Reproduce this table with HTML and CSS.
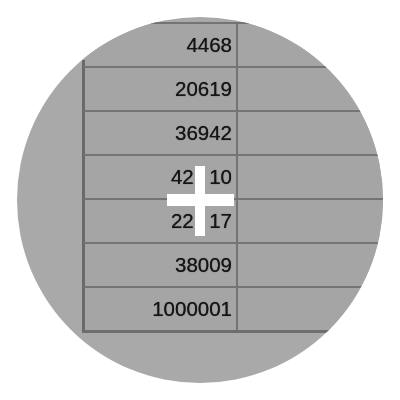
FILE: index.html
```
<!DOCTYPE html>
<html>
<head>
<meta charset="utf-8">
<link rel="stylesheet" href="styles.css">
</head>
<body>
<div class="lens">
  <div class="sheet">
    <div class="row first"><div class="a">4468</div><div class="b"></div></div>
    <div class="row"><div class="a">20619</div><div class="b"></div></div>
    <div class="row"><div class="a">36942</div><div class="b"></div></div>
    <div class="row"><div class="a">42<span class="hid">1</span>10</div><div class="b"></div></div>
    <div class="row"><div class="a">22<span class="hid">1</span>17</div><div class="b"></div></div>
    <div class="row"><div class="a">38009</div><div class="b"></div></div>
    <div class="row last"><div class="a">1000001</div><div class="b"></div></div>
  </div>
  <div class="cross"><span class="h"></span><span class="v"></span></div>
</div>
</body>
</html>
```
FILE: styles.css
```
html, body {
  margin: 0;
  padding: 0;
  background: #ffffff;
}
body {
  padding: 17px;
}
.lens {
  position: relative;
  width: 366px;
  height: 366px;
  border-radius: 50%;
  overflow: hidden;
  background: #a9a9a9;
}
.sheet {
  padding-top: 5px;
  margin-left: 65px;
  width: 420px;
  font-family: "Liberation Sans", Arial, sans-serif;
  font-size: 20.5px;
  color: #151515;
}
.row {
  position: relative;
  display: flex;
  height: 42px;
  border-top: 2px solid #747474;
  border-left: 3px solid #6a6a6a;
  background: #a5a5a5;
}
.row.first {
  border-left-color: transparent;
}
.row.first::before {
  content: "";
  position: absolute;
  left: -3px;
  bottom: 0;
  width: 3px;
  height: 6px;
  background: #6a6a6a;
}
.row.last {
  border-bottom: 3px solid #6e6e6e;
}
.a {
  box-sizing: border-box;
  width: 153px;
  padding-right: 4px;
  border-right: 2px solid #747474;
  text-align: right;
  line-height: 42px;
  text-shadow: 0 0 0.8px rgba(0, 0, 0, 0.8);
  filter: blur(0.3px);
}
.hid {
  margin: 0 3.5px 0 0.5px;
}
.b {
  flex: 1;
}
.cross .h {
  position: absolute;
  left: 150px;
  top: 177px;
  width: 67px;
  height: 12px;
  background: #ffffff;
}
.cross .v {
  position: absolute;
  left: 178px;
  top: 149px;
  width: 10px;
  height: 70px;
  background: #ffffff;
}
```
